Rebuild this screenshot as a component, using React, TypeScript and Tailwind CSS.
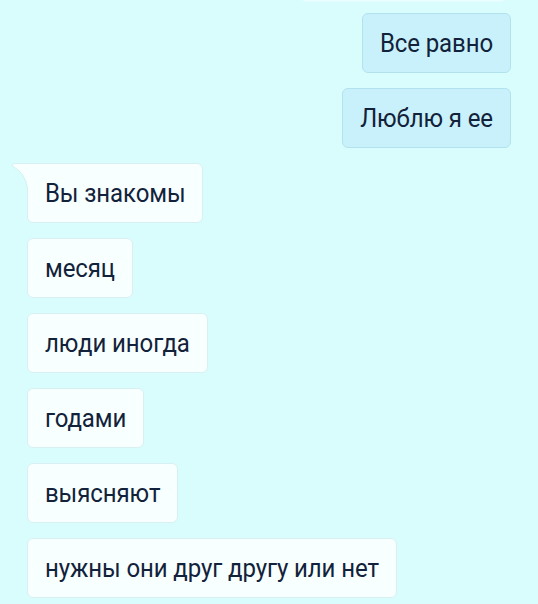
const OUTGOING = ['Все равно', 'Люблю я ее'];
const INCOMING = ['Вы знакомы', 'месяц', 'люди иногда', 'годами', 'выясняют', 'нужны они друг другу или нет'];

function Bubble({ text, out, tail }: { text: string; out?: boolean; tail?: boolean }) {
  return (
    <div
      className={`relative flex h-[60px] items-center rounded-[6px] border px-[17px] text-[24px] leading-none text-[#12223a] ${
        out
          ? 'self-end border-[#b3e2ef] bg-[#c9f1fb]'
          : 'self-start border-[#d9f0f3] bg-[#f8ffff]'
      } ${tail ? 'rounded-tl-none' : ''}`}
    >
      {tail && (
        <svg
          className="absolute left-[-17px] top-[-1px]"
          width="18"
          height="27"
          viewBox="-17 -1 18 27"
        >
          <path d="M 1 0 L -13 0 Q -16 0 -15 2 Q -2 9 0 25 L 1 25 Z" fill="#f8ffff" />
          <path d="M 0 -0.5 L -13 -0.5 Q -16.5 -0.5 -15.2 2.3 Q -2.5 9 -0.5 25" fill="none" stroke="#d9f0f3" strokeWidth="1" />
        </svg>
      )}
      <span className="scale-y-110 whitespace-nowrap tracking-[-0.1px]">{text}</span>
    </div>
  );
}

export default function App() {
  return (
    <div className="h-[604px] w-[538px] overflow-hidden bg-[#d9fdfd] font-['Roboto','Liberation_Sans',sans-serif]">
      <div className="flex flex-col gap-[15px] px-[27px]">
        {/* previous message, scrolled mostly out of view */}
        <div className="mb-[-4px] mr-[4px] mt-[-58px] h-[60px] w-[207px] self-end rounded-[6px] border border-[#e6fbfd] bg-[#e9feff]" />
        {OUTGOING.map(t => (
          <Bubble key={t} text={t} out />
        ))}
        {INCOMING.map((t, i) => (
          <Bubble key={t} text={t} tail={i === 0} />
        ))}
      </div>
    </div>
  );
}
